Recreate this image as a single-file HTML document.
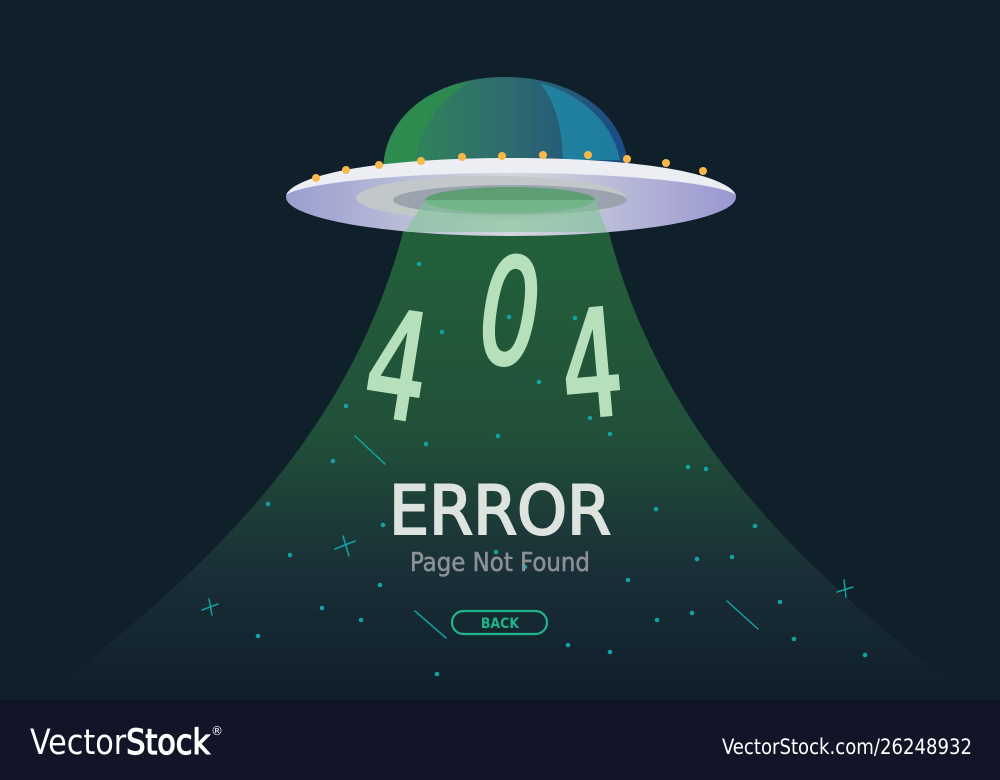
<!DOCTYPE html>
<html><head><meta charset="utf-8"><style>
html,body{margin:0;padding:0;background:#10202b;}
body{width:1000px;height:780px;overflow:hidden;position:relative;font-family:"DejaVu Sans Condensed","Liberation Sans",sans-serif;}
svg{position:absolute;left:0;top:0}
</style></head><body>
<svg width="1000" height="780" viewBox="0 0 1000 780" xmlns="http://www.w3.org/2000/svg">
<defs>
<linearGradient id="beam" x1="0" y1="0" x2="0" y2="1">
<stop offset="0" stop-color="#23613a"/>
<stop offset="0.45" stop-color="#215039"/>
<stop offset="0.75" stop-color="#1a2e37"/>
<stop offset="1" stop-color="#10202b"/>
</linearGradient>
<linearGradient id="dome" x1="0" y1="0" x2="1" y2="0">
<stop offset="0" stop-color="#2f8a52"/>
<stop offset="0.5" stop-color="#2f6c6e"/>
<stop offset="1" stop-color="#1b4a86"/>
</linearGradient>
<linearGradient id="disc" x1="0" y1="0" x2="1" y2="0">
<stop offset="0" stop-color="#9a9ed0"/>
<stop offset="0.5" stop-color="#d4d8dc"/>
<stop offset="1" stop-color="#9a98d2"/>
</linearGradient>
</defs>
<rect width="1000" height="700" fill="#10202b"/>
<path d="M405,225 L607,225 C650,400 760,540 960,690 L50,690 C250,540 360,400 405,225 Z" fill="url(#beam)"/>
<path d="M383,172 C383,115 435,77 505,77 C575,77 628,115 628,172 Z" fill="url(#dome)"/>
<path d="M540,83 C578,93 612,120 620,160 L563,160 C562,128 556,103 540,83 Z" fill="#1f8aa8" opacity="0.8"/>
<path d="M386,170 C388,120 425,88 470,82 C438,100 418,130 414,170 Z" fill="#2e8f4c" opacity="0.8"/>
<ellipse cx="511" cy="197" rx="225" ry="39" fill="url(#disc)"/>
<path d="M286,195 C300,170 400,158 511,158 C622,158 722,170 736,195 C720,183 620,173 511,173 C402,173 302,183 286,195 Z" fill="#eceef4"/>
<ellipse cx="491" cy="198" rx="135" ry="22" fill="#c2c8ca"/>
<ellipse cx="510" cy="200" rx="117" ry="15" fill="#9aa3ae"/>
<ellipse cx="510" cy="200" rx="85" ry="13" fill="#5f9e74"/>
<path d="M425,200 L595,200 L607,232 L405,232 Z" fill="#7fc596" opacity="0.6"/>
<g fill="#f7b94a">
<circle cx="316" cy="178" r="4"/><circle cx="346" cy="170" r="4"/><circle cx="379" cy="165" r="4"/>
<circle cx="421" cy="161" r="4"/><circle cx="462" cy="157" r="4"/><circle cx="502" cy="156" r="4"/>
<circle cx="543" cy="155" r="4"/><circle cx="588" cy="155" r="4"/><circle cx="627" cy="159" r="4"/>
<circle cx="666" cy="163" r="4"/><circle cx="703" cy="171" r="4"/>
</g>
<g fill="#12a2a0">
<circle cx="419" cy="264" r="2.3"/><circle cx="442" cy="332" r="2.3"/><circle cx="509" cy="317" r="2.3"/>
<circle cx="575" cy="318" r="2.3"/><circle cx="346" cy="406" r="2.3"/><circle cx="426" cy="444" r="2.3"/>
<circle cx="498" cy="436" r="2.3"/><circle cx="590" cy="418" r="2.3"/><circle cx="610" cy="434" r="2.3"/>
<circle cx="539" cy="382" r="2.3"/><circle cx="333" cy="461" r="2.3"/><circle cx="688" cy="467" r="2.3"/>
<circle cx="706" cy="469" r="2.3"/><circle cx="268" cy="504" r="2.3"/><circle cx="656" cy="509" r="2.3"/>
<circle cx="755" cy="526" r="2.3"/><circle cx="383" cy="525" r="2.3"/><circle cx="290" cy="555" r="2.3"/>
<circle cx="628" cy="580" r="2.3"/><circle cx="380" cy="585" r="2.3"/><circle cx="525" cy="567" r="2.3"/>
<circle cx="697" cy="559" r="2.3"/><circle cx="732" cy="557" r="2.3"/><circle cx="657" cy="620" r="2.3"/>
<circle cx="692" cy="613" r="2.3"/><circle cx="780" cy="602" r="2.3"/><circle cx="322" cy="608" r="2.3"/>
<circle cx="361" cy="620" r="2.3"/><circle cx="258" cy="636" r="2.3"/><circle cx="794" cy="639" r="2.3"/>
<circle cx="610" cy="652" r="2.3"/><circle cx="865" cy="655" r="2.3"/><circle cx="437" cy="674" r="2.3"/>
<circle cx="568" cy="645" r="2.3"/><circle cx="496" cy="552" r="2.3"/>
</g>
<g stroke="#12a2a0" stroke-width="1.5" stroke-linecap="round">
<line x1="355" y1="436" x2="385" y2="464"/><line x1="415" y1="611" x2="446" y2="638"/><line x1="727" y1="601" x2="758" y2="629"/>
<line x1="335" y1="549" x2="355" y2="541"/><line x1="343" y1="536" x2="349" y2="556"/>
<line x1="202" y1="610" x2="218" y2="604"/><line x1="209" y1="599" x2="212" y2="615"/>
<line x1="837" y1="592" x2="853" y2="587"/><line x1="844" y1="580" x2="846" y2="597"/>
</g>
<g fill="#b5e0bb" stroke="#b5e0bb" stroke-width="4" font-family="DejaVu Sans Condensed, Liberation Sans Narrow, sans-serif" font-size="146">
<text transform="translate(360,412) rotate(9) scale(0.72,1)">4</text>
<text transform="translate(472,358) rotate(9) scale(0.72,1)">0</text>
<text transform="translate(566,418) rotate(-5) scale(0.72,1)">4</text>
</g>
<text x="500" y="534" text-anchor="middle" fill="#dde4e0" stroke="#dde4e0" stroke-width="2" font-size="68" font-family="DejaVu Sans Condensed, sans-serif" textLength="222" lengthAdjust="spacingAndGlyphs">ERROR</text>
<text x="500" y="571" text-anchor="middle" fill="#8a9297" stroke="#8a9297" stroke-width="0.5" font-size="26" font-family="DejaVu Sans Condensed, sans-serif" textLength="180" lengthAdjust="spacingAndGlyphs">Page Not Found</text>
<rect x="452" y="611" width="95" height="23" rx="11.5" fill="none" stroke="#1fb48a" stroke-width="2.2"/>
<text x="500" y="628" text-anchor="middle" fill="#1fb48a" font-size="14" font-weight="bold" font-family="DejaVu Sans Condensed, sans-serif">BACK</text>
<rect x="0" y="700" width="1000" height="80" fill="#121428"/>
<text x="30" y="754" fill="#fff" font-size="35" font-family="DejaVu Sans Condensed, sans-serif" textLength="180" lengthAdjust="spacingAndGlyphs"><tspan>Vector</tspan><tspan stroke="#fff" stroke-width="1.2">Stock</tspan></text>
<text x="211" y="735" fill="#fff" font-size="12" font-family="DejaVu Sans, sans-serif">®</text>
<text x="972" y="754" text-anchor="end" fill="#fff" font-size="21" font-family="DejaVu Sans Condensed, sans-serif" textLength="250" lengthAdjust="spacingAndGlyphs">VectorStock.com/26248932</text>
</svg>
</body></html>
